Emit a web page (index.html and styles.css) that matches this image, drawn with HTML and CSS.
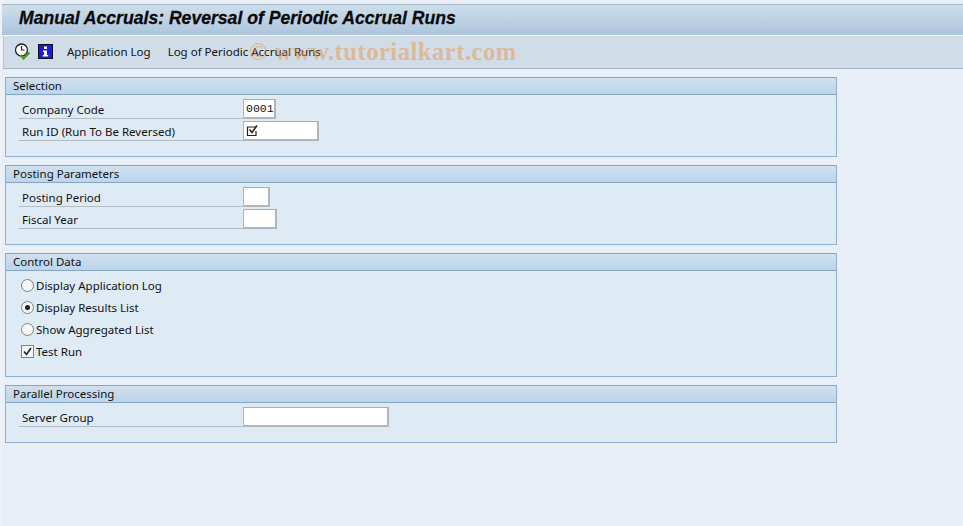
FILE: index.html
```html
<!DOCTYPE html>
<html lang="en">
<head>
  <meta charset="UTF-8">
  <title>Manual Accruals: Reversal of Periodic Accrual Runs</title>
  <link rel="stylesheet" href="styles.css">
</head>
<body>
  <div class="title-bar">
    <h1>Manual Accruals: Reversal of Periodic Accrual Runs</h1>
  </div>

  <div class="toolbar">
    <svg class="tool-icon" width="17" height="17" viewBox="0 0 17 17">
      <circle cx="7.5" cy="7" r="6" fill="#fff" stroke="#222" stroke-width="1.3"/>
      <path d="M7.5 3v4h3" fill="none" stroke="#222" stroke-width="1.2"/>
      <path d="M6.5 12l3 3.5 6-6" fill="none" stroke="#4d9a2e" stroke-width="2.2"/>
    </svg>
    <svg class="tool-icon info-icon" width="15" height="15" viewBox="0 0 15 15">
      <rect width="15" height="15" fill="#111"/>
      <rect x="1" y="1" width="13" height="13" fill="#1a1ae0"/>
      <path d="M6 2.5h3v2.5H6zM5 6.5h4v4.5h1.2v1.5H4.8V11H6V8H5z" fill="#fff"/>
    </svg>
    <span class="tool-link first">Application Log</span>
    <span class="tool-link">Log of Periodic Accrual Runs</span>
    <span class="watermark">© www.tutorialkart.com</span>
  </div>

  <div class="content">
    <section class="group group-selection">
      <h2>Selection</h2>
      <div class="group-body">
        <div class="row">
          <label>Company Code</label>
          <span class="field w33 mono">0001</span>
        </div>
        <div class="row">
          <label>Run ID (Run To Be Reversed)</label>
          <span class="field w76">
            <svg class="check-mark" width="13" height="13" viewBox="0 0 13 13">
              <path d="M10 3H1.5v8.5H10V7" fill="none" stroke="#222" stroke-width="1.2"/>
              <path d="M3.5 5.5l2.5 3 5-7" fill="none" stroke="#222" stroke-width="1.5"/>
            </svg>
          </span>
        </div>
      </div>
    </section>

    <section class="group group-posting">
      <h2>Posting Parameters</h2>
      <div class="group-body">
        <div class="row">
          <label>Posting Period</label>
          <span class="field w27"></span>
        </div>
        <div class="row">
          <label>Fiscal Year</label>
          <span class="field w34"></span>
        </div>
      </div>
    </section>

    <section class="group group-control">
      <h2>Control Data</h2>
      <div class="group-body">
        <div class="option"><span class="radio"></span>Display Application Log</div>
        <div class="option"><span class="radio on"></span>Display Results List</div>
        <div class="option"><span class="radio"></span>Show Aggregated List</div>
        <div class="option">
          <span class="checkbox">
            <svg width="9" height="9" viewBox="0 0 9 9">
              <path d="M1 4.5l2.5 3L8 1" fill="none" stroke="#222" stroke-width="1.6"/>
            </svg>
          </span>Test Run
        </div>
      </div>
    </section>

    <section class="group group-parallel">
      <h2>Parallel Processing</h2>
      <div class="group-body">
        <div class="row">
          <label>Server Group</label>
          <span class="field w146"></span>
        </div>
      </div>
    </section>
  </div>
</body>
</html>
```

FILE: styles.css
```css
/* General */
html, body {
  height: 100%;
}

body {
  margin: 0;
  padding-top: 4px;
  box-sizing: border-box;
  height: 526px;
  overflow: hidden;
  background: #e8eff7;
  color: #111;
  font-family: "Noto Sans", sans-serif;
  font-size: 11.5px;
  border-left: 2px solid #eef2f8;
}

/* Title bar */
.title-bar {
  height: 30px;
  margin-left: -1px;
  border-top: 1px solid #a9b6c6;
  border-bottom: 1px solid #f4f8fb;
  background: linear-gradient(to bottom, #cddfeb, #adc4dc);
  display: flex;
  align-items: center;
}

.title-bar h1 {
  margin: 0 0 3px 18px;
  font-family: "Liberation Sans", sans-serif;
  font-size: 17.6px;
  font-weight: bold;
  font-style: italic;
  color: #0a0a0a;
  -webkit-text-stroke: 0.3px #0a0a0a;
  white-space: nowrap;
}

/* Toolbar */
.toolbar {
  height: 30px;
  padding-bottom: 2px;
  margin-left: 1px;
  border-left: 1px solid #b6c5d5;
  border-bottom: 1px solid #a5b6c9;
  background: #d0dde8;
  display: flex;
  align-items: center;
  position: relative;
}

.tool-icon {
  margin-left: 10px;
  flex: none;
}

.info-icon {
  margin-left: 7px;
}

.tool-link {
  margin-left: 17px;
  white-space: nowrap;
}

.tool-link.first {
  margin-left: 14px;
}

.watermark {
  position: absolute;
  left: 245px;
  top: 2px;
  font-family: "Liberation Serif", serif;
  font-size: 24.6px;
  font-weight: bold;
  letter-spacing: 0.5px;
  color: rgba(232, 150, 70, 0.5);
  white-space: nowrap;
}

/* Group boxes */
.content {
  padding: 8px 0 0 3px;
  display: flex;
  flex-direction: column;
  gap: 8px;
}

.group {
  width: 832px;
  box-sizing: border-box;
  border: 1px solid #8fb0d0;
  border-top-color: #8aa6c4;
  background: #deeaf4;
  display: flex;
  flex-direction: column;
}

.group-selection,
.group-posting {
  height: 80px;
}

.group-control {
  height: 124px;
}

.group-parallel {
  height: 58px;
}

.group h2 {
  margin: 0;
  height: 16px;
  line-height: 15px;
  padding-left: 7px;
  font-size: 11.5px;
  font-weight: normal;
  background: linear-gradient(to bottom, #cfe0ef, #bdd4ea);
  border-bottom: 1px solid #87a6c6;
}

.group-body {
  padding: 3px 0 0 13px;
  display: flex;
  flex-direction: column;
}

/* Form rows */
.row {
  height: 22px;
  display: flex;
  align-items: center;
}

.row label {
  width: 224px;
  height: 20px;
  line-height: 21px;
  padding-left: 3px;
  box-sizing: border-box;
  border-bottom: 1px solid #b4bcc4;
  margin-bottom: 1px;
}

.field {
  height: 20px;
  box-sizing: border-box;
  background: #fff;
  border: 1px solid #b0b6bb;
  border-top-color: #a7afb5;
  border-right-width: 2px;
  border-bottom-width: 2px;
  display: flex;
  align-items: center;
  padding-left: 2px;
}

.mono {
  font-family: "Liberation Mono", monospace;
  font-size: 11.5px;
}

.w27 { width: 27px; }
.w33 { width: 33px; }
.w34 { width: 34px; }
.w76 { width: 76px; }
.w146 { width: 146px; }

/* Radio buttons and checkbox */
.option {
  height: 22px;
  padding-left: 2px;
  display: flex;
  align-items: center;
}

.radio {
  width: 13px;
  height: 13px;
  box-sizing: border-box;
  border: 1px solid #7d8287;
  border-radius: 50%;
  background: #f4f6f8;
  margin-right: 2px;
  display: flex;
  align-items: center;
  justify-content: center;
}

.radio.on::after {
  content: "";
  width: 5px;
  height: 5px;
  border-radius: 50%;
  background: #222;
}

.checkbox {
  width: 13px;
  height: 13px;
  box-sizing: border-box;
  border: 1px solid #7d8287;
  background: #f6f7f8;
  margin-right: 2px;
  display: flex;
  align-items: center;
  justify-content: center;
}
```
